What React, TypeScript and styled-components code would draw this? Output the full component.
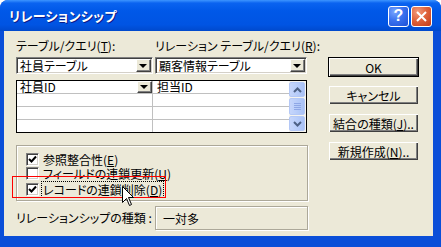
import React from "react";
import styled, { createGlobalStyle } from "styled-components";

const GlobalStyle = createGlobalStyle`
  body {
    margin: 0;
    background: #ffffff;
    font-family: "Noto Sans CJK JP", "Liberation Sans", sans-serif;
    font-feature-settings: "palt";
    font-size: 12px;
    color: #000000;
  }
`;

const Window = styled.div`
  position: relative;
  width: 441px;
  height: 247px;
  box-sizing: border-box;
  display: flex;
  flex-direction: column;
  background: #0a4ed8;
  border-radius: 8px 8px 0 0;
  overflow: hidden;
`;

const TitleBar = styled.div`
  height: 31px;
  flex-shrink: 0;
  display: flex;
  align-items: center;
  justify-content: space-between;
  padding: 0 9px 0 9px;
  background: linear-gradient(
    to bottom,
    #3d95ff 0%,
    #0a63f0 10%,
    #0058e8 35%,
    #0054e3 80%,
    #0049cc 100%
  );
`;

const Title = styled.div`
  color: #ffffff;
  font-weight: bold;
  font-size: 13px;
  letter-spacing: 0.3px;
  text-shadow: 1px 1px 0 #0a1c8a;
`;

const TitleButtons = styled.div`
  display: flex;
  gap: 2px;
  margin-top: 1px;
`;

const CaptionButton = styled.div<{ $red?: boolean }>`
  width: 19px;
  height: 19px;
  border: 1px solid #ffffff;
  border-radius: 3px;
  display: flex;
  align-items: center;
  justify-content: center;
  color: #ffffff;
  font-family: "Liberation Sans", sans-serif;
  font-weight: bold;
  font-size: 16px;
  background: ${(p) =>
    p.$red
      ? "radial-gradient(circle at 30% 25%, #f29a7c 0%, #e0643d 45%, #c33a18 100%)"
      : "radial-gradient(circle at 30% 25%, #7aa6ff 0%, #3a72ef 45%, #1c4fd6 100%)"};
`;

const Body = styled.div`
  flex: 1;
  margin: 0 8px 11px 4px;
  background: #ece9d8;
  padding: 8px 0 0 12px;
  display: flex;
  gap: 20px;
`;

const LeftColumn = styled.div`
  width: 292px;
  display: flex;
  flex-direction: column;
`;

const TwoCols = styled.div`
  display: grid;
  grid-template-columns: 139px 1fr;
  align-items: center;
`;

const Label = styled.div`
  line-height: 14px;
  white-space: nowrap;
`;

const ComboRow = styled(TwoCols)`
  margin-top: 4px;
  width: 291px;
`;

const Combo = styled.div<{ $w: number }>`
  width: ${(p) => p.$w}px;
  height: 17px;
  box-sizing: border-box;
  border: 1px solid;
  border-color: #808080 #ffffff #ffffff #808080;
  box-shadow: inset 1px 1px 0 #404040, inset -1px -1px 0 #d4d0c8;
  background: #ffffff;
  display: flex;
  align-items: center;
  padding: 1px 1px 1px 3px;
`;

const ComboText = styled.div`
  flex: 1;
  line-height: 13px;
  white-space: nowrap;
`;

const DropButton = styled.div<{ $h: number }>`
  width: 15px;
  height: ${(p) => p.$h}px;
  box-sizing: border-box;
  background: #ece9d8;
  border: 1px solid;
  border-color: #ffffff #404040 #404040 #ffffff;
  box-shadow: inset -1px -1px 0 #808080;
  display: flex;
  align-items: center;
  justify-content: center;
`;

const Arrow = styled.div`
  width: 0;
  height: 0;
  border-left: 4px solid transparent;
  border-right: 4px solid transparent;
  border-top: 4px solid #000000;
  margin-left: -1px;
`;

const FieldGrid = styled.div`
  margin-top: 6px;
  width: 291px;
  height: 53px;
  box-sizing: border-box;
  border: 1px solid #000000;
  background: #ffffff;
  display: grid;
  grid-template-columns: 136px 1fr 17px;
  grid-template-rows: 13px 13px 13px 12px;
`;

const Cell = styled.div<{ $first?: boolean; $last?: boolean }>`
  box-sizing: border-box;
  border-bottom: ${(p) => (p.$last ? "none" : "1px solid #c0c0c0")};
  border-right: ${(p) => (p.$first ? "1px solid #c0c0c0" : "none")};
  display: flex;
  align-items: center;
  justify-content: space-between;
  padding-left: ${(p) => (p.$first ? "3px" : "4px")};
  line-height: 12px;
  white-space: nowrap;
`;

const ScrollBar = styled.div`
  grid-column: 3;
  grid-row: 1 / span 4;
  display: flex;
  flex-direction: column;
  gap: 1px;
  padding: 1px 1px 1px 0;
  background: #f4f3ee;
`;

const ScrollBtn = styled.div<{ $grow?: boolean }>`
  height: ${(p) => (p.$grow ? "auto" : "15px")};
  flex: ${(p) => (p.$grow ? "1" : "none")};
  box-sizing: border-box;
  border: 1px solid #b4c8f6;
  border-radius: 2px;
  background: linear-gradient(to right, #c6d6fb, #b5cbf9 60%, #a9c1f5);
  display: flex;
  align-items: center;
  justify-content: center;
`;

const GroupBox = styled.div`
  margin-top: 12px;
  width: 292px;
  height: 56px;
  box-sizing: border-box;
  border: 1px solid #aca899;
  box-shadow: 1px 1px 0 #ffffff, inset 1px 1px 0 #ffffff;
  padding: 6px 0 0 9px;
  display: flex;
  flex-direction: column;
`;

const CheckRow = styled.div<{ $h: number }>`
  height: ${(p) => p.$h}px;
  display: flex;
  align-items: center;
  gap: 3px;
`;

const CheckBox = styled.div`
  width: 13px;
  height: 13px;
  box-sizing: border-box;
  border: 1px solid;
  border-color: #808080 #ffffff #ffffff #808080;
  box-shadow: inset 1px 1px 0 #404040, inset -1px -1px 0 #d4d0c8;
  background: #ffffff;
  display: flex;
  align-items: center;
  justify-content: center;
`;

const CheckLabel = styled.div<{ $focus?: boolean }>`
  line-height: 13px;
  padding: 1px;
  white-space: nowrap;
  outline: ${(p) => (p.$focus ? "1px dotted #000000" : "none")};
`;

const TypeRow = styled(TwoCols)`
  margin-top: 5px;
`;

const ValueBox = styled.div`
  width: 153px;
  height: 24px;
  box-sizing: border-box;
  border: 1px solid #aca899;
  box-shadow: 1px 1px 0 #ffffff, inset 1px 1px 0 #ffffff;
  display: flex;
  align-items: center;
  padding-left: 7px;
`;

const RightColumn = styled.div`
  margin-top: 18px;
  width: 91px;
  display: flex;
  flex-direction: column;
  gap: 8px;
`;

const PushButton = styled.div<{ $default?: boolean }>`
  height: 20px;
  box-sizing: border-box;
  background: #ece9d8;
  border: 1px solid ${(p) => (p.$default ? "#000000" : "transparent")};
  box-shadow: ${(p) =>
    p.$default
      ? "inset 1px 1px 0 #ffffff, inset -1px -1px 0 #404040, inset -2px -2px 0 #808080"
      : "inset 1px 1px 0 #ffffff, inset -1px -1px 0 #404040, inset -2px -2px 0 #808080"};
  display: flex;
  align-items: center;
  justify-content: center;
  line-height: 13px;
  white-space: nowrap;
`;

const RedMark = styled.div`
  position: absolute;
  left: 12px;
  top: 176px;
  width: 154px;
  height: 22px;
  box-sizing: border-box;
  border: 1px solid #ff0000;
  pointer-events: none;
`;

const Cursor = styled.svg`
  position: absolute;
  left: 122px;
  top: 186px;
`;

function Check({ on }: { on: boolean }) {
  return (
    <CheckBox>
      {on && (
        <svg width="9" height="9" viewBox="0 0 9 9">
          <path d="M1 4 L3.5 6.5 L8 1.5" fill="none" stroke="#000" strokeWidth="2" />
        </svg>
      )}
    </CheckBox>
  );
}

function Chevron({ up }: { up: boolean }) {
  return (
    <svg width="9" height="6" viewBox="0 0 9 6">
      <path
        d={up ? "M1 5 L4.5 1.5 L8 5" : "M1 1 L4.5 4.5 L8 1"}
        fill="none"
        stroke="#4d6185"
        strokeWidth="2"
      />
    </svg>
  );
}

export default function App() {
  return (
    <>
      <GlobalStyle />
      <Window>
        <TitleBar>
          <Title>リレーションシップ</Title>
          <TitleButtons>
            <CaptionButton>?</CaptionButton>
            <CaptionButton $red>
              <svg width="11" height="11" viewBox="0 0 11 11">
                <path d="M1 1 L10 10 M10 1 L1 10" stroke="#fff" strokeWidth="2" />
              </svg>
            </CaptionButton>
          </TitleButtons>
        </TitleBar>
        <Body>
          <LeftColumn>
            <TwoCols>
              <Label>
                テーブル/クエリ(<u>T</u>):
              </Label>
              <Label>
                リレーション テーブル/クエリ(<u>R</u>):
              </Label>
            </TwoCols>
            <ComboRow>
              <Combo $w={137}>
                <ComboText>社員テーブル</ComboText>
                <DropButton $h={13}>
                  <Arrow />
                </DropButton>
              </Combo>
              <Combo $w={152}>
                <ComboText>顧客情報テーブル</ComboText>
                <DropButton $h={13}>
                  <Arrow />
                </DropButton>
              </Combo>
            </ComboRow>
            <FieldGrid>
              <Cell $first>
                社員ID
                <DropButton $h={12}>
                  <Arrow />
                </DropButton>
              </Cell>
              <Cell>担当ID</Cell>
              <ScrollBar>
                <ScrollBtn>
                  <Chevron up />
                </ScrollBtn>
                <ScrollBtn $grow>
                  <svg width="7" height="7" viewBox="0 0 7 7">
                    <path d="M0 0.5 H7 M0 2.5 H7 M0 4.5 H7 M0 6.5 H7" stroke="#8ea7e6" strokeWidth="1" />
                  </svg>
                </ScrollBtn>
                <ScrollBtn>
                  <Chevron up={false} />
                </ScrollBtn>
              </ScrollBar>
              <Cell $first />
              <Cell />
              <Cell $first />
              <Cell />
              <Cell $first $last />
              <Cell $last />
            </FieldGrid>
            <GroupBox>
              <CheckRow $h={14}>
                <Check on />
                <CheckLabel>
                  参照整合性(<u>E</u>)
                </CheckLabel>
              </CheckRow>
              <CheckRow $h={15}>
                <Check on={false} />
                <CheckLabel>
                  フィールドの連鎖更新(<u>U</u>)
                </CheckLabel>
              </CheckRow>
              <CheckRow $h={17}>
                <Check on />
                <CheckLabel $focus>
                  レコードの連鎖削除(<u>D</u>)
                </CheckLabel>
              </CheckRow>
            </GroupBox>
            <TypeRow>
              <Label>リレーションシップの種類 :</Label>
              <ValueBox>一対多</ValueBox>
            </TypeRow>
          </LeftColumn>
          <RightColumn>
            <PushButton $default>OK</PushButton>
            <PushButton>キャンセル</PushButton>
            <PushButton>
              結合の種類(<u>J</u>)..
            </PushButton>
            <PushButton>
              新規作成(<u>N</u>)..
            </PushButton>
          </RightColumn>
        </Body>
        <RedMark />
        <Cursor width="13" height="21" viewBox="0 0 13 21">
          <path
            d="M0.5 0.5 L0.5 16.5 L4.5 12.5 L7.5 19.5 L9.5 18.5 L6.5 11.5 L11.5 11.5 Z"
            fill="#ffffff"
            stroke="#000000"
            strokeWidth="1"
          />
        </Cursor>
      </Window>
    </>
  );
}
